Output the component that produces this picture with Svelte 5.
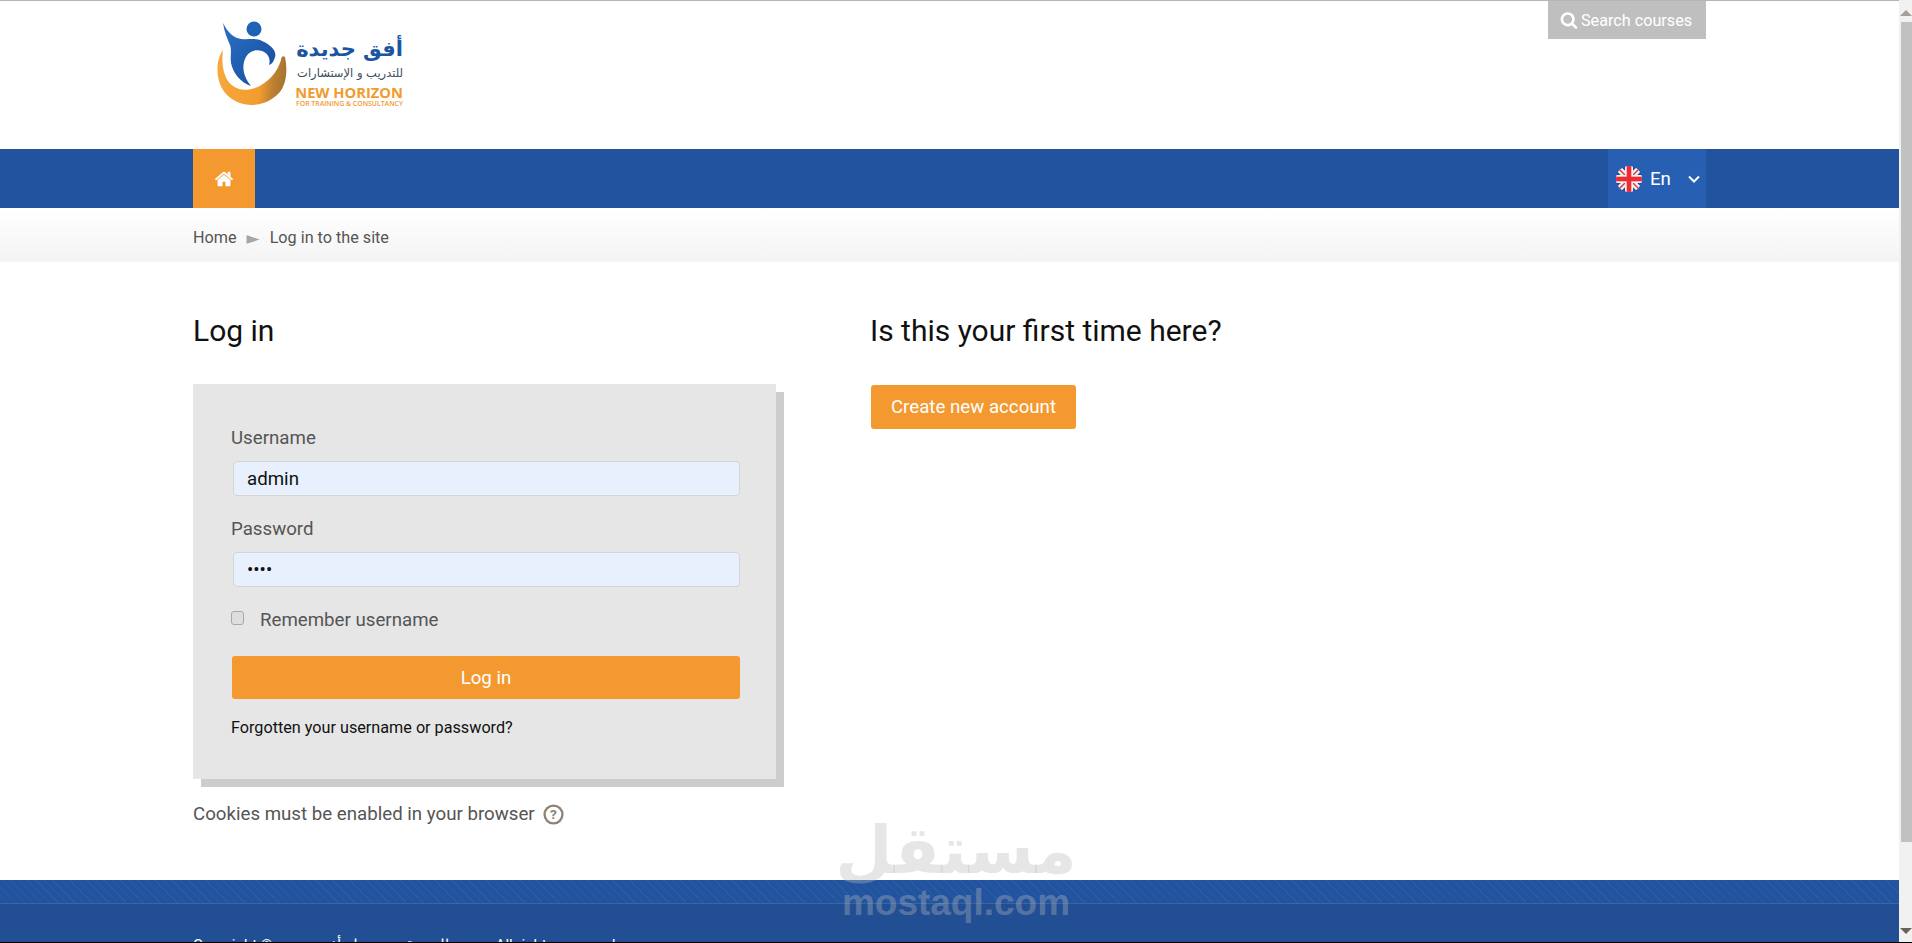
<script>
  const crumbs = ['Home', 'Log in to the site'];
</script>

<div class="screen">
  <div class="page">
    <header class="top">
      <div class="wrap top-row">
        <a class="logo" href="#home">
          <svg class="logo-mark" viewBox="0 0 78 92" width="78" height="92" aria-hidden="true">
            <defs>
              <linearGradient id="ring" x1="0" y1="0" x2="1" y2="0.1">
                <stop offset="0" stop-color="#f6a93c" />
                <stop offset="0.68" stop-color="#f29c30" />
                <stop offset="0.85" stop-color="#c08232" />
                <stop offset="1" stop-color="#a9752f" />
              </linearGradient>
              <linearGradient id="body" x1="0" y1="0" x2="1" y2="1">
                <stop offset="0" stop-color="#2a72c4" />
                <stop offset="1" stop-color="#174a9c" />
              </linearGradient>
            </defs>
            <path d="M10 33C2 44 2 66 14 78C28 92 52 91 66 76C73 68 75 55 72 40C70 38 68 40 68 43C64 56 55 66 42 71C28 76 16 70 12 58C9 50 9 40 10 33z" fill="url(#ring)" />
            <circle cx="41" cy="12" r="7.5" fill="#1f62b6" />
            <path d="M10 6C14 14 19 19 24 21C32 24 42 20 49 24C58 28 64 34 62 40C61 44 59 47 56 48C58 42 55 36 49 34C41 31 33 36 31 45C29 53 32 62 38 69C28 66 20 56 18 46C17 38 19 34 17 28C14 21 11 14 10 6z" fill="url(#body)" />
          </svg>
          <div class="logo-text">
            <span class="logo-ar" dir="rtl">أفق جديدة</span>
            <span class="logo-ar2" dir="rtl">للتدريب و الإستشارات</span>
            <span class="logo-en">NEW HORIZON</span>
            <span class="logo-sub">FOR TRAINING &amp; CONSULTANCY</span>
          </div>
        </a>
        <button class="search-btn" type="button">
          <svg viewBox="0 0 1792 1792" width="18" height="18" aria-hidden="true">
            <path fill="currentColor" d="M1216 832q0-185-131.5-316.5t-316.5-131.5-316.5 131.5-131.5 316.5 131.5 316.5 316.5 131.5 316.5-131.5 131.5-316.5zm512 832q0 52-38 90t-90 38q-54 0-90-38l-343-342q-179 124-399 124-143 0-273.5-55.5t-225-150-150-225-55.5-273.5 55.5-273.5 150-225 225-150 273.5-55.5 273.5 55.5 225 150 150 225 55.5 273.5q0 220-124 399l343 343q37 37 37 90z" />
          </svg>
          Search courses
        </button>
      </div>
    </header>

    <nav class="nav">
      <div class="wrap nav-row">
        <a class="home-tab" href="#home" aria-label="Home">
          <svg viewBox="0 0 1792 1792" width="20" height="20" aria-hidden="true">
            <path fill="#fff" d="M1472 992v480q0 26-19 45t-45 19h-384v-384h-256v384h-384q-26 0-45-19t-19-45v-480q0-1 .5-3t.5-3l575-474 575 474q1 2 1 6zm223-69l-62 74q-8 9-21 11h-3q-13 0-21-7l-692-577-692 577q-12 8-24 7-13-2-21-11l-62-74q-8-10-7-23.5t11-21.5l719-599q32-26 76-26t76 26l244 204v-195q0-14 9-23t23-9h192q14 0 23 9t9 23v408l219 182q10 8 11 21.5t-7 23.5z" />
          </svg>
        </a>
        <div class="lang">
          <svg viewBox="0 0 26 26" width="26" height="26" aria-hidden="true">
            <defs><clipPath id="flag"><circle cx="13" cy="13" r="13" /></clipPath></defs>
            <g clip-path="url(#flag)">
              <rect width="26" height="26" fill="#2b4a9a" />
              <path d="M0 0L26 26M26 0L0 26" stroke="#f5f0ee" stroke-width="6" />
              <path d="M0 0L13 13M26 26L13 13M26 0L13 13M0 26L13 13" stroke="#e8303a" stroke-width="1.4" />
              <rect x="9" width="8" height="26" fill="#f5f0ee" />
              <rect y="9" width="26" height="8" fill="#f5f0ee" />
              <rect x="10.7" width="4.6" height="26" fill="#ee2a35" />
              <rect y="10.7" width="26" height="4.6" fill="#ee2a35" />
            </g>
          </svg>
          <span class="lang-name">En</span>
          <svg class="chev" viewBox="0 0 12 8" width="12" height="8" aria-hidden="true">
            <path d="M1 1.5l5 5 5-5" fill="none" stroke="#fff" stroke-width="2" />
          </svg>
        </div>
      </div>
    </nav>

    <div class="crumbs">
      <div class="wrap crumb-row">
        {#each crumbs as crumb, i (crumb)}
          {#if i > 0}<span class="sep">►</span>{/if}
          <span>{crumb}</span>
        {/each}
      </div>
    </div>

    <main class="wrap content">
      <section class="col-login">
        <h2>Log in</h2>
        <form class="login-box" onsubmit={(e) => e.preventDefault()}>
          <label class="field-label" for="username">Username</label>
          <input id="username" class="field" type="text" value="admin" />
          <label class="field-label second" for="password">Password</label>
          <input id="password" class="field" type="password" value="1234" />
          <label class="remember">
            <input type="checkbox" />
            <span>Remember username</span>
          </label>
          <button class="btn btn-full" type="submit">Log in</button>
          <a class="forgot" href="#forgot">Forgotten your username or password?</a>
        </form>
        <p class="cookies">
          Cookies must be enabled in your browser
          <svg viewBox="0 0 20 20" width="21" height="21" aria-hidden="true">
            <circle cx="10" cy="10" r="8.5" fill="none" stroke="#8f8378" stroke-width="2.2" />
            <text x="10" y="14.5" text-anchor="middle" font-size="13" font-weight="700" fill="#8f8378" font-family="Roboto, sans-serif">?</text>
          </svg>
        </p>
      </section>

      <section class="col-signup">
        <h2>Is this your first time here?</h2>
        <button class="btn btn-create" type="button">Create new account</button>
      </section>
    </main>

    <footer class="footer">
      <div class="footer-band"></div>
      <div class="wrap footer-copy">Copyright © جميع الحقوق محفوظة أفق جديدة . All rights reserved</div>
    </footer>

    <div class="watermark">
      <span class="wm-ar" dir="rtl">مستقل</span>
      <span class="wm-en">mostaql.com</span>
    </div>
  </div>

  <aside class="scrollbar">
    <span class="arrow up"></span>
    <div class="thumb"></div>
    <span class="arrow down"></span>
  </aside>
</div>

<style>
  :global(body) {
    margin: 0;
    background: #fff;
    font-family: Roboto, sans-serif;
  }

  .screen {
    display: flex;
    height: 942px;
    overflow: hidden;
    border-bottom: 1px solid #000;
  }

  .page {
    position: relative;
    flex: 1;
    min-width: 0;
    border-top: 1px solid #b5b5b5;
    color: #555;
  }

  .wrap {
    width: 1513px;
    margin-left: 193px;
  }

  .top {
    height: 148px;
  }
  .top-row {
    display: flex;
    justify-content: space-between;
    align-items: flex-start;
  }

  .logo {
    display: flex;
    gap: 4px;
    margin: 16px 0 0 20px;
    text-decoration: none;
  }
  .logo-mark {
    flex: none;
  }
  .logo-text {
    display: flex;
    flex-direction: column;
    align-items: flex-end;
    width: 108px;
    margin-top: 17px;
  }
  .logo-ar {
    font-family: "DejaVu Sans", sans-serif;
    font-weight: 700;
    font-size: 21px;
    line-height: 30px;
    color: #1c559f;
  }
  .logo-ar2 {
    font-family: "DejaVu Sans", sans-serif;
    font-size: 11.5px;
    line-height: 19px;
    color: #3b4a5e;
  }
  .logo-en {
    font-family: "Open Sans", sans-serif;
    font-weight: 700;
    font-size: 14.7px;
    line-height: 14px;
    margin-top: 2px;
    color: #f29a2e;
    white-space: nowrap;
  }
  .logo-sub {
    font-family: "Open Sans", sans-serif;
    font-weight: 600;
    font-size: 6.9px;
    line-height: 8px;
    margin-top: 1px;
    color: #f29a2e;
    white-space: nowrap;
  }

  .search-btn {
    display: flex;
    align-items: center;
    gap: 3px;
    width: 158px;
    height: 38px;
    padding: 0 0 0 12px;
    border: 0;
    background: #bfbfbf;
    color: #fff;
    font: 16.2px Roboto, sans-serif;
  }

  .nav {
    height: 59px;
    background: #22539f;
  }
  .nav-row {
    display: flex;
    justify-content: space-between;
    height: 100%;
  }
  .home-tab {
    display: flex;
    align-items: center;
    justify-content: center;
    width: 62px;
    background: #f39930;
  }
  .lang {
    display: flex;
    align-items: center;
    width: 98px;
    box-sizing: border-box;
    padding-left: 8px;
    background: #2760b3;
    color: #fff;
  }
  .lang-name {
    margin-left: 8px;
    font-size: 18.7px;
  }
  .chev {
    margin-left: 17px;
  }

  .crumbs {
    height: 54px;
    background: linear-gradient(#fff, #f4f4f4);
    font-size: 16.2px;
    color: #555;
  }
  .crumb-row {
    display: flex;
    align-items: center;
    height: 100%;
    padding-top: 5px;
    box-sizing: border-box;
  }
  .sep {
    margin: 0 10px;
    font-family: "DejaVu Sans", sans-serif;
    font-size: 17px;
    color: #a5a5a5;
  }

  .content {
    display: flex;
    height: 618px;
    box-sizing: border-box;
    padding-top: 49px;
  }
  h2 {
    margin: 0;
    font-size: 30px;
    font-weight: 400;
    line-height: 40px;
    color: #111;
  }
  .col-login {
    width: 677px;
  }

  .login-box {
    display: flex;
    flex-direction: column;
    align-items: flex-start;
    width: 583px;
    height: 395px;
    box-sizing: border-box;
    margin-top: 33px;
    padding: 42px 37px 0 38px;
    background: #e6e6e6;
    box-shadow: 8px 8px 0 #ccc;
  }
  .field-label {
    font-size: 18.7px;
    line-height: 24px;
    color: #555;
  }
  .field-label.second {
    margin-top: 21px;
  }
  .field {
    width: 507px;
    height: 35px;
    box-sizing: border-box;
    margin: 11px 0 0 2px;
    padding: 0 13px;
    border: 1px solid #d4d4d4;
    border-radius: 4px;
    background: #e8f0fe;
    color: #111;
    font: 18.7px Roboto, sans-serif;
  }
  .remember {
    display: flex;
    align-items: center;
    margin-top: 21px;
    font-size: 18.7px;
    line-height: 24px;
    color: #555;
  }
  .remember input {
    appearance: none;
    width: 13px;
    height: 14px;
    box-sizing: border-box;
    margin: 0 16px 4px 0;
    border: 1px solid #a9a9a9;
    border-radius: 3px;
    background: #dedede;
  }

  .btn {
    border: 0;
    border-radius: 3px;
    background: #f39930;
    color: #fff;
    font: 18.7px Roboto, sans-serif;
  }
  .btn-full {
    width: 508px;
    height: 43px;
    margin: 24px 0 0 1px;
  }
  .btn-create {
    width: 205px;
    height: 44px;
    margin: 34px 0 0 1px;
  }
  .forgot {
    margin-top: 17px;
    font-size: 16.2px;
    line-height: 24px;
    color: #111;
    text-decoration: none;
  }

  .cookies {
    display: flex;
    align-items: center;
    gap: 8px;
    margin: 23px 0 0;
    font-size: 18.7px;
    line-height: 24px;
    color: #555;
  }

  .footer {
    height: 62px;
    overflow: hidden;
    background: #224f94;
    color: #fff;
  }
  .footer-band {
    height: 23px;
    border-bottom: 1px solid #3a669f;
    background: repeating-linear-gradient(45deg, #22539f 0 5px, #2a5ba6 5px 6px);
  }
  .footer-copy {
    margin-top: 31px;
    font-size: 15px;
    line-height: 20px;
    white-space: nowrap;
  }

  .watermark {
    position: absolute;
    left: 838px;
    top: 815px;
    display: flex;
    flex-direction: column;
    align-items: center;
    width: 236px;
    color: rgba(185, 185, 185, 0.36);
    pointer-events: none;
  }
  .wm-ar {
    font-family: "DejaVu Sans", sans-serif;
    font-weight: 700;
    font-size: 66px;
    line-height: 70px;
    white-space: nowrap;
  }
  .wm-en {
    font-family: "Liberation Sans", sans-serif;
    font-weight: 700;
    font-size: 37px;
    line-height: 34px;
    white-space: nowrap;
  }

  .scrollbar {
    position: relative;
    flex: none;
    width: 13px;
    background: #f1f1f1;
  }
  .thumb {
    width: 11px;
    height: 820px;
    margin: 22px 0 0 2px;
    background: #c1c1c1;
  }
  .arrow {
    position: absolute;
    right: 0;
    width: 0;
    height: 0;
    border-left: 6px solid transparent;
    border-right: 6px solid transparent;
  }
  .arrow.up {
    top: 10px;
    border-bottom: 6px solid #a79e96;
  }
  .arrow.down {
    bottom: 8px;
    border-top: 6px solid #6b615a;
  }
</style>
